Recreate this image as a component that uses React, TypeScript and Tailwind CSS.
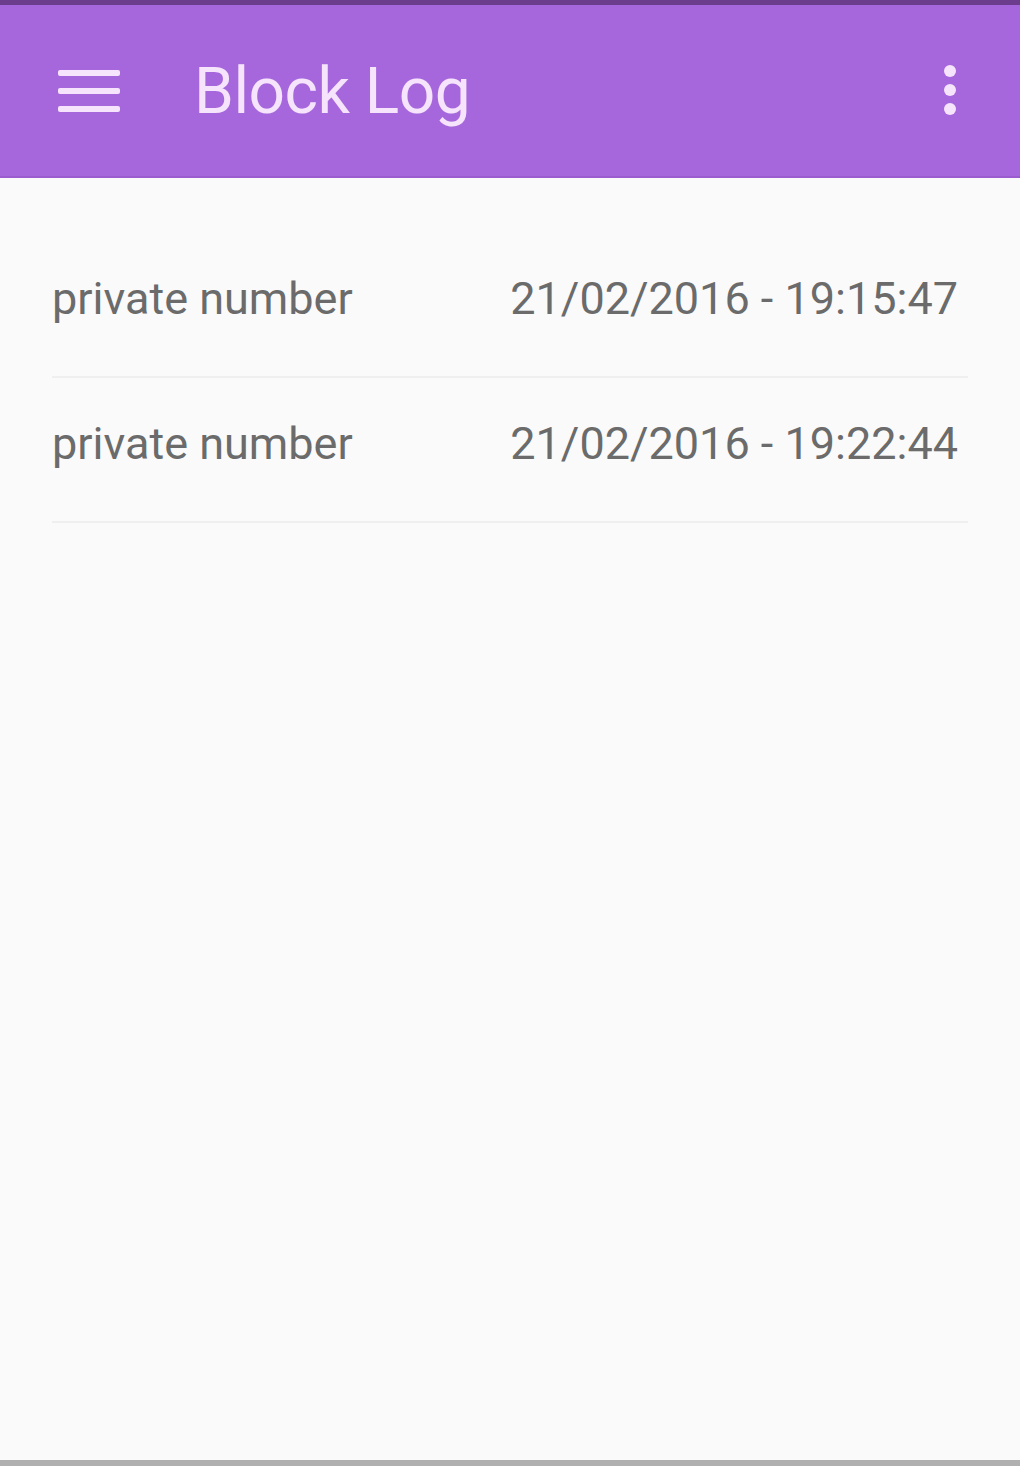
const entries = [
  { caller: "private number", time: "21/02/2016 - 19:15:47" },
  { caller: "private number", time: "21/02/2016 - 19:22:44" },
]

function MenuIcon() {
  return (
    <svg width="62" height="46" viewBox="0 0 62 46" className="block">
      <rect x="0" y="2" width="62" height="6" rx="2" fill="#f5e4fb" />
      <rect x="0" y="20" width="62" height="6" rx="2" fill="#f5e4fb" />
      <rect x="0" y="38" width="62" height="6" rx="2" fill="#f5e4fb" />
    </svg>
  )
}

function MoreIcon() {
  return (
    <svg width="14" height="56" viewBox="0 0 14 56" className="block">
      <circle cx="7" cy="8" r="6" fill="#f5e4fb" />
      <circle cx="7" cy="27" r="6" fill="#f5e4fb" />
      <circle cx="7" cy="46" r="6" fill="#f5e4fb" />
    </svg>
  )
}

export default function App() {
  return (
    <div className="flex flex-col h-[1466px] bg-[#fafafa] font-['Roboto',sans-serif] overflow-hidden">
      <div className="h-[5px] bg-[#6b3d8c]" />
      <header className="h-[173px] bg-[#a767dc] border-b-2 border-[#9a5ccf] flex items-center pl-[58px] pr-[63px]">
        <MenuIcon />
        <h1 className="ml-[74px] text-[64px] leading-none text-[#f5e4fb] tracking-[-0.5px] mt-[2px]">Block Log</h1>
        <div className="ml-auto">
          <MoreIcon />
        </div>
      </header>

      <ul className="flex-1 pt-[55px] px-[52px]">
        {entries.map((entry, index) => (
          <li
            key={index}
            className="h-[145px] flex items-center justify-between border-b-2 border-[#efefef] pr-[10px] pb-[12px]"
          >
            <span className="text-[45px] text-[#6b6b6b]">{entry.caller}</span>
            <span className="text-[45px] text-[#6b6b6b]">{entry.time}</span>
          </li>
        ))}
      </ul>

      <div className="h-[6px] bg-[#b0b0b0]" />
    </div>
  )
}
